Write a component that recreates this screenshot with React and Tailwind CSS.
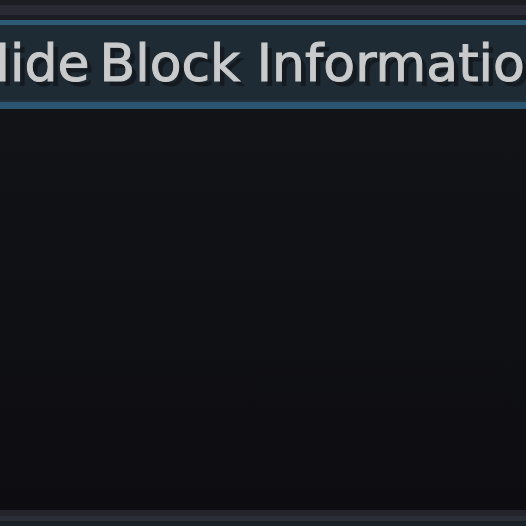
import React from 'react';

export default function App() {
  return (
    <div className="w-[526px] h-[526px] overflow-hidden flex flex-col bg-[#111216]">
      {/* top bar */}
      <div className="h-[5px] bg-[#1c1d23]" />
      <div className="h-[10px] bg-[#292a33]" />
      <div className="h-[5px] bg-[#1a1c22]" />
      <div className="h-[5px] bg-[#2d5a75]" />

      {/* title strip */}
      <div
        className="h-[75px] bg-[#1f2b34] overflow-hidden flex items-center whitespace-nowrap text-[52px] leading-none text-[#c9cacb] [text-shadow:5px_5px_0_#141a1f] [-webkit-text-stroke:1px_#c9cacb] [filter:blur(0.6px)]"
        style={{ fontFamily: '"DejaVu Sans", sans-serif' }}
      >
        <span className="shrink-0 ml-[-29px]">Hide</span>
        <span className="shrink-0 ml-[10px]">Block Information</span>
      </div>
      <div className="h-[9px] bg-[#2a546f] border-t-2 border-[#22323c]" />

      {/* body */}
      <div className="flex-1 bg-gradient-to-b from-[#121317] to-[#0d0d11]" />

      {/* bottom bar */}
      <div className="h-[6px] bg-[#24242c]" />
      <div className="h-[5px] bg-[#2b2f38]" />
      <div className="h-[5px] bg-[#1a2126]" />
    </div>
  );
}
